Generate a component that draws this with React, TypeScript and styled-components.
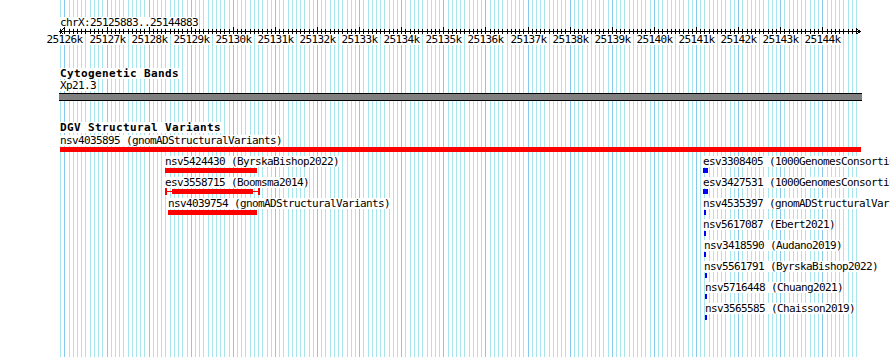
import styled, { createGlobalStyle } from "styled-components";

const BP_START = 25125883;
const BP_END = 25144883;
const VIEW_LEFT = 60;
const VIEW_WIDTH = 800;
const PX_PER_BP = VIEW_WIDTH / (BP_END - BP_START);

const toPx = (bp: number) => VIEW_LEFT + (bp - BP_START) * PX_PER_BP;

const RED = "#ff0000";
const BLUE = "#0000ff";

type Feature = {
  name: string;
  source: string;
  row: number;
  x: number;
  w: number;
  color: string;
  labelX?: number;
  whiskers?: { start: number; end: number };
};

const dgvFeatures: Feature[] = [
  { name: "nsv4035895", source: "gnomADStructuralVariants", row: 0, x: 60, w: 801, color: RED },
  { name: "nsv5424430", source: "ByrskaBishop2022", row: 1, x: 165, w: 92, color: RED },
  {
    name: "esv3558715",
    source: "Boomsma2014",
    row: 2,
    x: 165,
    w: 95,
    color: RED,
    whiskers: { start: 7, end: 88 },
  },
  { name: "nsv4039754", source: "gnomADStructuralVariants", row: 3, x: 168, w: 89, color: RED },
  { name: "esv3308405", source: "1000GenomesConsortiumPhase3", row: 1, x: 703, w: 5, color: BLUE },
  { name: "esv3427531", source: "1000GenomesConsortiumPilot", row: 2, x: 703, w: 5, color: BLUE },
  { name: "nsv4535397", source: "gnomADStructuralVariants", row: 3, x: 704, w: 2, color: BLUE, labelX: 703 },
  { name: "nsv5617087", source: "Ebert2021", row: 4, x: 704, w: 2, color: BLUE, labelX: 703 },
  { name: "nsv3418590", source: "Audano2019", row: 5, x: 704, w: 2, color: BLUE, labelX: 704 },
  { name: "nsv5561791", source: "ByrskaBishop2022", row: 6, x: 705, w: 2, color: BLUE, labelX: 704 },
  { name: "nsv5716448", source: "Chuang2021", row: 7, x: 705, w: 2, color: BLUE, labelX: 705 },
  { name: "nsv3565585", source: "Chaisson2019", row: 8, x: 705, w: 2, color: BLUE, labelX: 705 },
];

const gridPositions: { x: number; major: boolean }[] = [];
for (let bp = 25125900; bp < BP_END; bp += 100) {
  gridPositions.push({ x: Math.floor(toPx(bp)) + 0.5, major: bp % 1000 === 0 });
}

const majorTicks = gridPositions.filter((g) => g.major);

export default function App() {
  return (
    <>
      <GlobalStyle />
      <Browser>
        <GridLayer width={890} height={357}>
          {gridPositions.map((g, i) => (
            <line
              key={i}
              x1={g.x}
              x2={g.x}
              y1={0}
              y2={357}
              stroke={g.major ? "#86c8ee" : "#a8e6ee"}
              strokeWidth={1}
            />
          ))}
        </GridLayer>

        <Tracks>
          <RulerTrack>
            <Location>chrX:25125883..25144883</Location>
            <Scale width={890} height={8}>
              <line x1={60} x2={860} y1={5.5} y2={5.5} stroke="#000" />
              <polyline points="64,2 60,5.5 64,9" fill="none" stroke="#000" />
              <polyline points="856,2 860,5.5 856,9" fill="none" stroke="#000" />
              {gridPositions.map((g, i) => (
                <line
                  key={i}
                  x1={g.x}
                  x2={g.x}
                  y1={g.major ? 1 : 3}
                  y2={g.major ? 8 : 8}
                  stroke="#000"
                />
              ))}
            </Scale>
            <TickRow>
              {majorTicks.map((t, i) => (
                <TickLabel key={i} style={{ left: t.x - 18 }}>
                  {25126 + i}k
                </TickLabel>
              ))}
            </TickRow>
          </RulerTrack>

          <Track $gap={23}>
            <TrackTitle>Cytogenetic Bands</TrackTitle>
            <FeatureCanvas $height={22}>
              <FeatureLabel style={{ left: 60, top: 1 }}>Xp21.3</FeatureLabel>
              <Band />
            </FeatureCanvas>
          </Track>

          <Track $gap={21}>
            <TrackTitle>DGV Structural Variants</TrackTitle>
            <FeatureCanvas $height={224}>
              {dgvFeatures.map((f) => {
                const barTop = 14 + f.row * 21;
                return (
                  <div key={f.name}>
                    <FeatureLabel style={{ left: f.labelX ?? f.x, top: barTop - 12 }}>
                      {f.name} ({f.source})
                    </FeatureLabel>
                    {f.whiskers ? (
                      <Glyph
                        width={f.w}
                        height={7}
                        style={{ left: f.x, top: barTop - 1 }}
                      >
                        <rect x={0} y={0} width={2} height={7} fill={f.color} />
                        <rect x={f.w - 2} y={0} width={2} height={7} fill={f.color} />
                        <rect x={0} y={3} width={f.w} height={1} fill={f.color} />
                        <rect
                          x={f.whiskers.start}
                          y={1}
                          width={f.whiskers.end - f.whiskers.start}
                          height={5}
                          fill={f.color}
                        />
                      </Glyph>
                    ) : (
                      <Bar
                        $color={f.color}
                        style={{ left: f.x, top: barTop, width: f.w }}
                      />
                    )}
                  </div>
                );
              })}
            </FeatureCanvas>
          </Track>
        </Tracks>
      </Browser>
    </>
  );
}

const GlobalStyle = createGlobalStyle`
  html, body {
    margin: 0;
    padding: 0;
    background: #ffffff;
  }
`;

const Browser = styled.div`
  position: relative;
  width: 890px;
  height: 357px;
  overflow: hidden;
  background: #ffffff;
  font-family: "DejaVu Sans Mono", "Liberation Mono", monospace;
  color: #000;
`;

const GridLayer = styled.svg`
  position: absolute;
  left: 0;
  top: 0;
  shape-rendering: crispEdges;
`;

const Tracks = styled.div`
  position: relative;
  display: flex;
  flex-direction: column;
`;

const RulerTrack = styled.div`
  display: flex;
  flex-direction: column;
  padding-top: 17px;
`;

const textLabel = `
  font-size: 11px;
  letter-spacing: -0.62px;
  line-height: 11px;
  height: 11px;
  white-space: nowrap;
  background: #ffffff;
`;

const Location = styled.div`
  ${textLabel}
  width: fit-content;
  margin-left: 60px;
`;

const Scale = styled.svg`
  display: block;
  margin-top: -2px;
  shape-rendering: crispEdges;
`;

const TickRow = styled.div`
  position: relative;
  height: 11px;
`;

const TickLabel = styled.span`
  ${textLabel}
  position: absolute;
  top: 0;
`;

const Track = styled.div<{ $gap: number }>`
  display: flex;
  flex-direction: column;
  margin-top: ${(p) => p.$gap}px;
`;

const TrackTitle = styled.div`
  width: fit-content;
  margin-left: 60px;
  font-size: 11px;
  font-weight: 700;
  letter-spacing: 0.38px;
  line-height: 11px;
  height: 11px;
  white-space: nowrap;
  background: #ffffff;
`;

const FeatureCanvas = styled.div<{ $height: number }>`
  position: relative;
  height: ${(p) => p.$height}px;
`;

const FeatureLabel = styled.span`
  ${textLabel}
  position: absolute;
`;

const Band = styled.div`
  position: absolute;
  left: 59px;
  top: 14px;
  width: 803px;
  height: 6px;
  background: #808080;
  border-top: 1px solid #000;
  border-bottom: 1px solid #000;
`;

const Bar = styled.div<{ $color: string }>`
  position: absolute;
  height: 5px;
  background: ${(p) => p.$color};
`;

const Glyph = styled.svg`
  position: absolute;
  shape-rendering: crispEdges;
`;
